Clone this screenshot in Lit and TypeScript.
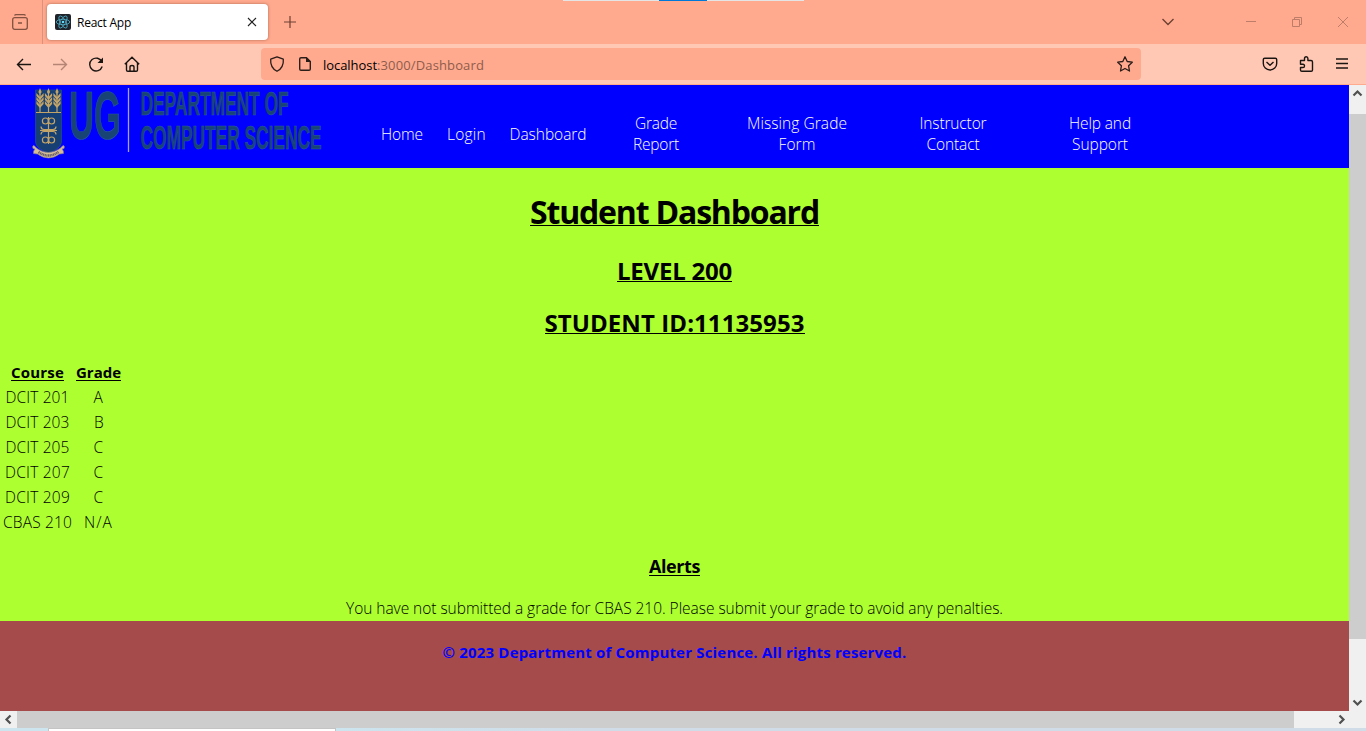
import { LitElement, html, css, svg } from "lit";
import { customElement, property } from "lit/decorators.js";

/* A run of text whose tracking is adjusted to occupy a known measure. */
@customElement("fit-text")
class FitText extends LitElement {
  @property({ type: Number }) measure = 0;
  @property() text = "";
  static styles = css`
    :host { display: inline-block; white-space: nowrap; }
    span { display: inline-block; }
  `;
  firstUpdated() {
    const s = this.renderRoot.querySelector("span") as HTMLElement;
    const w = s.getBoundingClientRect().width;
    s.style.letterSpacing = (this.measure - w) / this.text.length + "px";
  }
  render() {
    return html`<span>${this.text}</span>`;
  }
}

const t = (text: string, w: number) => html`<fit-text .text=${text} .measure=${w}></fit-text>`;

const ear = (x: number) => svg`
  <g transform="translate(${x} 1)" fill="#c3a468">
    <path d="M0 2 L1.600 6 L0 9 L-1.600 6z"/>
    <path d="M0 11L-3.600 7V10L0 14L3.600 10V7z M0 15L-3.600 11V14L0 18L3.600 14V11z M0 19L-3.600 15V18L0 22L3.600 18V15z"/>
    <path d="M-.6 8h1.200v18h-1.200z"/>
  </g>`;

@customElement("app-root")
class AppRoot extends LitElement {
  static styles = css`
    :host {
      display: block; width: 1366px; height: 731px; overflow: hidden;
      font-family: "Open Sans", "Noto Sans", sans-serif; color: #000;
    }
    * { box-sizing: border-box; }
    svg { display: block; flex: none; overflow: visible; fill: none; }
    .window { display: flex; flex-direction: column; height: 731px; background: #ffaa8f; }
    .tabs { height: 44px; display: flex; align-items: center; position: relative; }
    .snap { position: absolute; left: 563px; top: 0; width: 241px; height: 1px; background: linear-gradient(to right, #e5e5e5 96px, #0078d7 96px 144px, #e5e5e5 144px); }
    .view { width: 43px; height: 44px; padding: 14px 0 0 12px; border-right: 1px solid #dc917a; }
    .tab { margin: 0 0 1px 4px; width: 221px; height: 36px; background: #fff; border-radius: 4px; box-shadow: 0 0 3px rgba(90,30,10,.5); display: flex; align-items: center; padding: 0 10px 0 8px; font-size: 12px; }
    .tab fit-text { margin: 1px auto 0 6px; }
    .plus { margin-left: 16px; }
    .down { margin-left: auto; }
    .min { margin-left: 72px; }
    .restore { margin-left: 36px; }
    .close { margin: 0 18px 0 36px; }
    .tools { height: 41px; background: #ffc8b5; border-bottom: 1px solid #ffaa8f; display: flex; align-items: center; padding-left: 16px; }
    .nav-icons { display: flex; gap: 20px; width: 245px; }
    .url { width: 880px; height: 32px; background: #ffaa8f; border-radius: 4px; display: flex; align-items: center; padding: 0 8px; font-size: 13px; }
    .url .page { margin: 0 10px 0 12px; }
    .url fit-text { margin-top: 2px; }
    .path { color: #8f5c4b; }
    .star { margin-left: auto; }
    .right { display: flex; gap: 20px; margin-left: 121px; }
    .main { display: grid; grid-template-columns: 1349px 17px; grid-template-rows: 626px 17px; }
    .doc { overflow: hidden; background: #adff2f; font-size: 15.5px; line-height: 21px; font-weight: 300; }
    header { height: 83px; background: #00f; color: #fff; display: flex; align-items: flex-start; }
    .logo { margin-left: 30px; width: 339px; height: 83px; }
    nav { display: flex; height: 83px; align-items: center; padding-top: 15px; }
    nav div { display: flex; flex-direction: column; align-items: center; }
    .w1 { width: 66px; } .w2 { width: 63px; } .w3 { width: 100px; } .w4 { width: 116px; }
    .w5 { width: 166px; } .w6 { width: 146px; } .w7 { width: 148px; }
    .body { height: 453px; text-align: center; display: flex; flex-direction: column; align-items: center; }
    .u { text-decoration: none; font-weight: 700; border-bottom: 1px solid #000; }
    h1, h2, h3, p { margin: 0; }
    h1 { margin-top: 22px; font-size: 32px; line-height: 44px; height: 36px; }
    h2 { font-size: 24px; line-height: 32px; height: 27px; }
    .lvl { margin-top: 29px; }
    .sid { margin-top: 25px; }
    h3 { font-size: 18px; line-height: 27px; height: 23px; margin-top: 17px; }
    table { align-self: flex-start; border-spacing: 2px; margin-top: 25px; }
    td, th { padding: 1px; height: 23px; }
    th .u { height: 19px; font-size: 15px; }
    .c1 { width: 71px; } .c2 { width: 47px; }
    .alert { margin-top: 22px; }
    footer { height: 90px; background: #a54b4b; color: #00f; font-weight: 700; font-size: 15px; text-align: center; padding-top: 21px; }
    .vbar { background: #f0f0f0; display: flex; flex-direction: column; align-items: center; }
    .vbar .thumb { width: 17px; height: 525px; margin: 12px 0 auto; background: #cdcdcd; }
    .hbar { grid-column: 1 / 3; background: #f0f0f0; display: flex; align-items: center; padding: 0 19px 0 3px; }
    .hbar .thumb { height: 17px; width: 1277px; margin: 0 auto 0 2px; background: #cdcdcd; }
    .under { height: 3px; background: #d0dde9; display: flex; }
    .under i { width: 48px; background: #cce5ee; }
    .under b { width: 288px; background: #fff; border: 1px solid #c4c4c4; border-bottom: 0; }
    .under u { width: 250px; background: linear-gradient(to right, #cce5ee, #d0dde9); }
  `;

  logo() {
    return svg`
      <svg width="300" height="83" viewBox="30 0 300 83">
        <path d="M35.500 5H61.500V57q0 6 -13 11.500Q35.500 63 35.500 57z" fill="#163f73" stroke="#2b5584" stroke-width=".6"/>
        ${ear(40)}${ear(48.500)}${ear(57)}
        <path d="M36 27.500H61" stroke="#c3a468"/>
        <g stroke="#c3a468" stroke-width="1.200">
          <path d="M48.500 32V59M40 45.500H57"/>
          <circle cx="45.400" cy="36" r="3"/><circle cx="51.600" cy="36" r="3"/>
          <circle cx="45.400" cy="55" r="3"/><circle cx="51.600" cy="55" r="3"/>
          <path d="M41 41.500q0 3 3 3h9q3 0 3 -3M41 49.500q0 -3 3 -3h9q3 0 3 3"/>
        </g>
        <path d="M34 60.500q-2 0 -1 3l2 .5q-2 2 -1.500 4.500l4 .5q11 8 22 0l4 -.5q.5 -2.500 -1.500 -4.500l2 -.5q1 -3 -1 -3l-3 3q-12 8 -23 0z" fill="#d5bd94" stroke="#8c8190" stroke-width=".6"/>
        <path d="M38.500 67q10 7 20 0" stroke="#695f6d" stroke-width="2.400" stroke-dasharray="1.200 .5"/>
        <path d="M128.500 3V67" stroke="#a8a3c6" stroke-width="1.300"/>
        <g fill="#174375" stroke="#2c5c96" stroke-width=".7" font-family="Liberation Sans">
          <text x="69" y="53.500" font-size="68" font-weight="700" textLength="52" lengthAdjust="spacingAndGlyphs">UG</text>
          <text x="140.500" y="30" font-size="34" font-weight="700" textLength="148" lengthAdjust="spacingAndGlyphs" stroke-width=".5">DEPARTMENT OF</text>
          <text x="140.500" y="64" font-size="34" font-weight="700" textLength="181" lengthAdjust="spacingAndGlyphs" stroke-width=".5">COMPUTER SCIENCE</text>
        </g>
      </svg>`;
  }

  render() {
    const rows: [string, number, string, number][] = [
      ["DCIT 201", 64, "A", 10], ["DCIT 203", 64, "B", 9], ["DCIT 205", 64, "C", 10],
      ["DCIT 207", 65, "C", 10], ["DCIT 209", 65, "C", 10], ["CBAS 210", 69, "N/A", 29],
    ];
    return html`
      <div class="window">
        <div class="tabs">
          <div class="snap"></div>
          <div class="view"><svg width="16" height="16" stroke="#81523f" stroke-width="1.300"><path d="M2.500 1.500Q3 .7 4 .7H12Q13 .7 13.500 1.500M6 9H10"/><rect x=".7" y="3.700" width="14.600" height="11.600" rx="2"/></svg></div>
          <div class="tab">
            <svg width="16" height="16"><rect width="16" height="16" rx="2" fill="#20232a"/><g stroke="#4fb4cf" stroke-width=".8"><ellipse cx="8" cy="8" rx="6.800" ry="2.700"/><ellipse cx="8" cy="8" rx="6.800" ry="2.700" transform="rotate(60 8 8)"/><ellipse cx="8" cy="8" rx="6.800" ry="2.700" transform="rotate(120 8 8)"/></g><circle cx="8" cy="8" r="1.300" fill="#61dafb"/></svg>
            ${t("React App", 54)}
            <svg width="12" height="12" stroke="#222" stroke-width="1.100"><path d="M2 2L10 10M10 2L2 10"/></svg>
          </div>
          <svg class="plus" width="12" height="12" stroke="#6d4032" stroke-width="1.200"><path d="M6 0V12M0 6H12"/></svg>
          <svg class="down" width="12" height="8" stroke="#6d4032" stroke-width="1.400"><path d="M.5 1L6 6.500L11.500 1"/></svg>
          <svg class="min" width="10" height="10" stroke="#bd7d69"><path d="M0 4.500H10"/></svg>
          <svg class="restore" width="10" height="10" stroke="#bd7d69"><path d="M.5 2.500H7.500V9.500H.5zM2.500 2.500V.5H9.500V7.500H7.500"/></svg>
          <svg class="close" width="10" height="10" stroke="#bd7d69"><path d="M0 0L10 10M10 0L0 10"/></svg>
        </div>
        <div class="tools">
          <div class="nav-icons">
            <svg width="16" height="16" stroke="#1b1512" stroke-width="1.400"><path d="M15 8.500H1.500M7 3L1.500 8.500L7 14"/></svg>
            <svg width="16" height="16" stroke="#b58474" stroke-width="1.400"><path d="M1 8.500H14.500M9 3L14.500 8.500L9 14"/></svg>
            <svg width="16" height="16" stroke="#1b1512" stroke-width="1.400"><path d="M14 6A6.400 6.400 0 1 0 14.200 10.500"/><path d="M15 1.500V7H9.500z" fill="#1b1512" stroke="none"/></svg>
            <svg width="16" height="16" stroke="#1b1512" stroke-width="1.400"><path d="M.8 8.200L8 1.200L15.200 8.200M2.500 7V14Q2.500 15.300 3.800 15.300H12.200Q13.500 15.300 13.500 14V7M6 15V11Q6 9.500 8 9.500T10 11V15"/></svg>
          </div>
          <div class="url">
            <svg width="16" height="16" stroke="#2b1d18" stroke-width="1.300"><path d="M8 .8L14.300 3.200Q15 11.500 8 15.300Q1 11.500 1.700 3.200z" stroke-linejoin="round"/></svg>
            <svg class="page" width="16" height="16" stroke="#2b1d18" stroke-width="1.400"><path d="M9.500 1.700H4Q2.700 1.700 2.700 3V13Q2.700 14.300 4 14.300H12Q13.300 14.300 13.300 13V5.500z" stroke-linejoin="round"/><path d="M9 1V6H14z" fill="#2b1d18" stroke="none"/></svg>
            ${t("localhost", 54)}<span class="path">${t(":3000/Dashboard", 107)}</span>
            <svg class="star" width="16" height="16" stroke="#2b1d18" stroke-width="1.300" stroke-linejoin="round"><path d="M8 .8L10.200 5.500L15.300 6.200L11.600 9.800L12.500 15L8 12.500L3.500 15L4.400 9.800L.7 6.200L5.800 5.500z"/></svg>
          </div>
          <div class="right">
            <svg width="16" height="16" stroke="#1b1512" stroke-width="1.400"><path d="M2.700 2.200H13.300Q14.700 2.200 14.700 3.600V7.500A6.700 6.500 0 0 1 1.300 7.500V3.600Q1.300 2.200 2.700 2.200zM4.500 6L8 9.300L11.500 6" stroke-linejoin="round"/></svg>
            <svg width="16" height="16" stroke="#1b1512" stroke-width="1.400" stroke-linejoin="round"><path d="M2.500 4.500H6.500V2.500Q6.500 .7 8.200 .7T9.900 2.500V4.500H13Q14.500 4.500 14.500 6V14Q14.500 15.300 13.200 15.300H3.800Q2.500 15.300 2.500 14V11.500H5Q6.500 11.500 6.500 9.900T5 8.300H2.500z"/></svg>
            <svg width="16" height="16" stroke="#1b1512" stroke-width="1.400"><path d="M2 3H14M2 7.500H14M2 12H14"/></svg>
          </div>
        </div>
        <div class="main">
          <div class="doc">
            <header>
              <div class="logo">${this.logo()}</div>
              <nav>
                <div class="w1">${t("Home", 42)}</div>
                <div class="w2">${t("Login", 39)}</div>
                <div class="w3">${t("Dashboard", 77)}</div>
                <div class="w4">${t("Grade", 42)}${t("Report", 46)}</div>
                <div class="w5">${t("Missing Grade", 100)}${t("Form", 37)}</div>
                <div class="w6">${t("Instructor", 67)}${t("Contact", 53)}</div>
                <div class="w7">${t("Help and", 62)}${t("Support", 56)}</div>
              </nav>
            </header>
            <div class="body">
              <h1 class="u">${t("Student Dashboard", 289)}</h1>
              <h2 class="u lvl">${t("LEVEL 200", 115)}</h2>
              <h2 class="u sid">${t("STUDENT ID:11135953", 260)}</h2>
              <table>
                <tr><th class="c1"><fit-text class="u" .text=${"Course"} .measure=${53}></fit-text></th><th class="c2"><fit-text class="u" .text=${"Grade"} .measure=${45}></fit-text></th></tr>
                ${rows.map((r) => html`<tr><td>${t(r[0], r[1])}</td><td>${t(r[2], r[3])}</td></tr>`)}
              </table>
              <h3 class="u">${t("Alerts", 51)}</h3>
              <p class="alert">${t("You have not submitted a grade for CBAS 210. Please submit your grade to avoid any penalties.", 657)}</p>
            </div>
            <footer>${t("© 2023 Department of Computer Science. All rights reserved.", 464)}</footer>
          </div>
          <div class="vbar">
            <svg width="17" height="17" stroke="#505050" stroke-width="2.200"><path d="M4.500 10.500L8.500 6.500L12.500 10.500"/></svg>
            <div class="thumb"></div>
            <svg width="17" height="17" stroke="#505050" stroke-width="2.200"><path d="M4.500 6.500L8.500 10.500L12.500 6.500"/></svg>
          </div>
          <div class="hbar">
            <svg width="12" height="17" stroke="#505050" stroke-width="2.200"><path d="M7.500 4.500L3.500 8.500L7.500 12.500"/></svg>
            <div class="thumb"></div>
            <svg width="12" height="17" stroke="#505050" stroke-width="2.200"><path d="M4.500 4.500L8.500 8.500L4.500 12.500"/></svg>
          </div>
        </div>
        <div class="under"><i></i><b></b><u></u></div>
      </div>`;
  }
}
